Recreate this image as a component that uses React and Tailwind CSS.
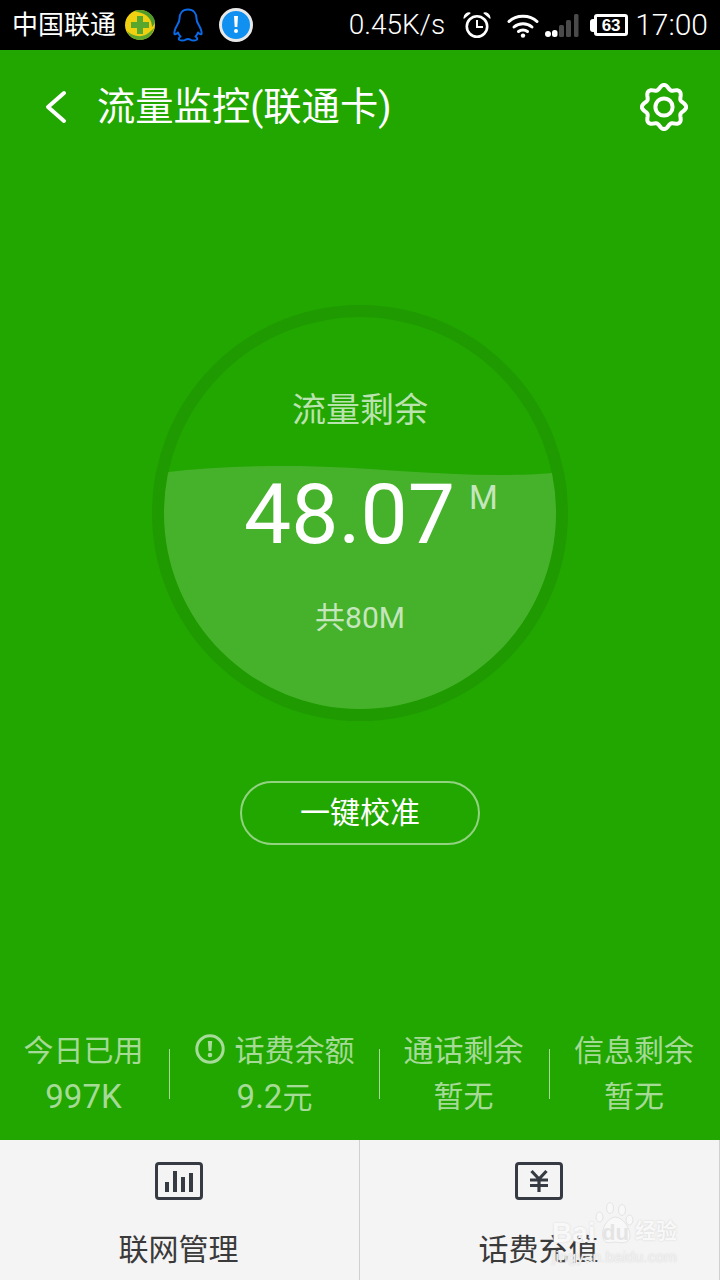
import React from "react";

const CJK = { fontFamily: 'Roboto, "Noto Sans CJK SC", sans-serif' };
const LATIN = { fontFamily: '"Liberation Sans", sans-serif' };

function gearPath(cx, cy, r, amp, n) {
  const pts = [];
  const steps = 160;
  for (let i = 0; i < steps; i++) {
    const t = (i / steps) * Math.PI * 2;
    const rr = r + amp * Math.cos(n * t);
    pts.push(`${(cx + rr * Math.sin(t)).toFixed(2)} ${(cy - rr * Math.cos(t)).toFixed(2)}`);
  }
  return "M" + pts.join("L") + "Z";
}

function Icon360() {
  return (
    <svg width="32" height="32" viewBox="0 0 32 32">
      <circle cx="16" cy="16" r="15" fill="#f0d010" />
      <path d="M16 1C23 1 29 5 31 12C30 16 29 17 28 18C28 11 24 5 14 3C12 2.5 11 2 10 2.3C12 1.4 14 1 16 1Z" fill="#4f9a2c" />
      <path d="M3 22C8 27 17 29 23 25C26 23 28 21 30 19C29 26 23 31 16 31C10 31 5 27 3 22Z" fill="#5fa62c" />
      <path d="M13 7H19V13H25V19H19V25H13V19H7V13H13Z" fill="#57a72e" />
    </svg>
  );
}

function IconQQ() {
  return (
    <svg width="30" height="34" viewBox="0 0 30 34" fill="none" stroke="#0a6ae8" strokeWidth="2">
      <path d="M15 1.5C9 1.5 6.5 6 6.5 10.5C6.5 13 6 14 4.5 16.5C2.5 20 1 24 1.5 26C2.5 27 4 25.5 5 24.5C5.5 26 6.5 27.5 7.5 28.5C6 29.5 5.5 30.5 6 31.5C7 33 11 32.8 13 31.5C14 31 16 31 17 31.5C19 32.8 23 33 24 31.5C24.5 30.5 24 29.5 22.5 28.5C23.5 27.5 24.5 26 25 24.5C26 25.5 27.5 27 28.5 26C29 24 27.5 20 25.5 16.5C24 14 23.5 13 23.5 10.5C23.5 6 21 1.5 15 1.5Z" strokeLinejoin="round" />
    </svg>
  );
}

function IconInfo() {
  return (
    <div className="flex h-[34px] w-[34px] items-center justify-center rounded-full border-[3px] border-[#e8e8e8] bg-[#1090f0]">
      <svg width="6" height="18" viewBox="0 0 6 18" fill="#fff">
        <path d="M1 0H5L4.3 11H1.7Z" />
        <circle cx="3" cy="15" r="2" />
      </svg>
    </div>
  );
}

function IconAlarm() {
  return (
    <svg width="30" height="28" viewBox="0 0 30 28" fill="none" stroke="#fff" strokeWidth="2.6">
      <circle cx="15" cy="15.5" r="10.2" />
      <path d="M15 9V16H21" strokeWidth="2" />
      <path d="M2 7C2.5 3.5 5 1.5 8 2Z" fill="#fff" strokeWidth="1.2" strokeLinejoin="round" />
      <path d="M28 7C27.5 3.5 25 1.5 22 2Z" fill="#fff" strokeWidth="1.2" strokeLinejoin="round" />
    </svg>
  );
}

function IconWifi() {
  return (
    <svg width="32" height="25" viewBox="0 0 32 25" fill="none" stroke="#fff" strokeWidth="3" strokeLinecap="round">
      <path d="M2 8.5C9 1.5 23 1.5 30 8.5" />
      <path d="M7 14C12 9.5 20 9.5 25 14" />
      <path d="M11.5 18.5C14 16.5 18 16.5 20.5 18.5" />
      <circle cx="16" cy="22.6" r="2.2" fill="#fff" stroke="none" />
    </svg>
  );
}

function IconSignal() {
  return (
    <svg width="34" height="23" viewBox="0 0 34 23">
      <rect x="0" y="17" width="6" height="6" rx="3" fill="#fff" />
      <rect x="7" y="16" width="5.5" height="7" rx="2.5" fill="#fff" />
      <rect x="14" y="11" width="5" height="12" rx="1.5" fill="#4a4a4a" />
      <rect x="21" y="6" width="5" height="17" rx="1.5" fill="#4a4a4a" />
      <rect x="29" y="0" width="4.5" height="23" rx="1.5" fill="#4a4a4a" />
    </svg>
  );
}

function Battery() {
  return (
    <div className="flex items-center">
      <div className="h-[13px] w-[4px] rounded-l-[3px] bg-white" />
      <div className="flex h-[22px] w-[34px] items-center justify-center rounded-[3px] border-[3px] border-white">
        <span className="text-[17px] font-bold leading-none text-white" style={LATIN}>63</span>
      </div>
    </div>
  );
}

function Stat({ label, children, warn }) {
  return (
    <div className={warn ? "flex h-[50px] items-center justify-center" : "flex h-[50px] items-center justify-center pr-[2px]"}>
      <div className="flex flex-col items-center text-[30px] leading-[46px] text-white/60">
        <div className="flex items-center whitespace-nowrap">
          {warn && (
            <svg className="mr-[10px] mt-[-4px]" width="30" height="30" viewBox="0 0 30 30" fill="none">
              <circle cx="15" cy="15" r="13.2" stroke="currentColor" strokeWidth="3" />
              <path d="M12.8 7H17.2L16.4 17H13.6Z" fill="currentColor" />
              <circle cx="15" cy="21" r="2.3" fill="currentColor" />
            </svg>
          )}
          <span>{label}</span>
        </div>
        <div>{children}</div>
      </div>
    </div>
  );
}

function Divider() {
  return <div className="h-[50px] w-px shrink-0 bg-white/60" />;
}

function BottomItem({ children, label }) {
  return (
    <div className="flex w-[360px] flex-col items-center border-r border-[#d0d0d0] pr-[2px] pt-[22px]">
      {children}
      <div className="mt-[30px] text-[30px] leading-[40px] text-[#3a3a3a]">{label}</div>
    </div>
  );
}

export default function App() {
  return (
    <div className="relative flex h-[1280px] w-[720px] flex-col overflow-hidden bg-[#22a600]" style={CJK}>
      {/* status bar */}
      <div className="flex h-[50px] shrink-0 items-center bg-black pl-[12px] pr-[12px] text-white">
        <span className="text-[26px] leading-none">中国联通</span>
        <div className="ml-[8px]"><Icon360 /></div>
        <div className="ml-[17px]"><IconQQ /></div>
        <div className="ml-[16px]"><IconInfo /></div>
        <div className="ml-auto flex items-center">
          <span className="text-[28px] leading-none font-light">0.45K/s</span>
          <div className="ml-[17px]"><IconAlarm /></div>
          <div className="ml-[15px]"><IconWifi /></div>
          <div className="ml-[6px]"><IconSignal /></div>
          <div className="ml-[11px]"><Battery /></div>
          <span className="ml-[7px] text-[30px] leading-none font-light">17:00</span>
        </div>
      </div>

      {/* header */}
      <div className="flex h-[114px] shrink-0 items-center pl-[45px] pr-[32px] text-white">
        <svg width="22" height="34" viewBox="0 0 22 34" fill="none" stroke="#fff" strokeWidth="4" strokeLinecap="round" strokeLinejoin="round">
          <path d="M19 3L3 17L19 31" />
        </svg>
        <div className="ml-[30px] flex-1 text-[38.3px] leading-none">流量监控(联通卡)</div>
        <svg width="48" height="48" viewBox="0 0 48 48" fill="none" stroke="#fff" strokeWidth="4">
          <path d={gearPath(24, 24, 20, 2.1, 8)} strokeLinejoin="round" />
          <circle cx="24" cy="24" r="8.6" />
        </svg>
      </div>

      {/* gauge */}
      <div className="mt-[141px] flex shrink-0 justify-center">
        <div className="relative h-[416px] w-[416px] rounded-full border-[12px] border-[#1f9a00]">
          <svg className="absolute inset-0" width="392" height="392" viewBox="0 0 392 392">
            <defs>
              <clipPath id="gauge-clip"><circle cx="196" cy="196" r="196" /></clipPath>
            </defs>
            <path clipPath="url(#gauge-clip)" d="M0 155.5C45 150 95 148.5 136 149C200 150 270 158 336 158C360 158 380 157 392 155.5V392H0Z" fill="#46b22b" />
          </svg>
          <div className="relative flex flex-col items-center pt-[70px]">
            <div className="text-[34px] leading-[46px] text-white/70">流量剩余</div>
            <div className="mt-[34px] mr-[21px] flex h-[96px] items-center">
              <span className="text-[84px] leading-none text-white">48.07</span>
            </div>
            <div className="mt-[35px] text-[30px] leading-[40px] text-white/70">共80M</div>
            <div className="absolute left-[305px] top-[164px] text-[33px] leading-none text-white/70">M</div>
          </div>
        </div>
      </div>

      {/* calibrate button */}
      <div className="mt-[60px] flex shrink-0 justify-center">
        <div className="flex h-[64px] w-[240px] items-center justify-center rounded-full border-2 border-white/50 text-[30px] leading-none text-white">一键校准</div>
      </div>

      <div className="flex-1" />

      {/* stats */}
      <div className="flex h-[116px] shrink-0 items-start pt-[25px]">
        <div className="w-[169px]"><Stat label="今日已用"><span className="text-[33px]">997K</span></Stat></div>
        <Divider />
        <div className="w-[209px]"><Stat label="话费余额" warn><span className="text-[33px]">9.2</span>元</Stat></div>
        <Divider />
        <div className="w-[169px]"><Stat label="通话剩余">暂无</Stat></div>
        <Divider />
        <div className="w-[170px]"><Stat label="信息剩余">暂无</Stat></div>
      </div>

      {/* bottom bar */}
      <div className="flex h-[140px] shrink-0 bg-[#f4f4f4]">
        <BottomItem label="联网管理">
          <svg width="48" height="38" viewBox="0 0 48 38" fill="none">
            <rect x="1.5" y="1.5" width="45" height="35" rx="2.5" stroke="#363a42" strokeWidth="3" />
            <rect x="10" y="20" width="4" height="10" fill="#363a42" />
            <rect x="18" y="9" width="4" height="21" fill="#363a42" />
            <rect x="26" y="15" width="4" height="15" fill="#363a42" />
            <rect x="34" y="11" width="4" height="19" fill="#363a42" />
          </svg>
        </BottomItem>
        <BottomItem label="话费充值">
          <svg width="48" height="38" viewBox="0 0 48 38" fill="none">
            <rect x="1.5" y="1.5" width="45" height="35" rx="2.5" stroke="#363a42" strokeWidth="3" />
            <path d="M16.5 9L24 17L31.5 9M15 18H33M15 23.5H33M24 17V30" stroke="#363a42" strokeWidth="3.2" />
          </svg>
        </BottomItem>
      </div>

      {/* watermark */}
      <div className="absolute left-[545px] top-[1202px] h-[66px] w-[140px]">
        <svg className="absolute left-[50px] top-0" width="40" height="46" viewBox="0 0 40 46" fill="#f8f8f8" stroke="#e4e4e4" strokeWidth="1">
          <ellipse cx="4.5" cy="15" rx="3.5" ry="5" />
          <ellipse cx="15" cy="6" rx="3.5" ry="5.5" />
          <ellipse cx="27" cy="8" rx="3.5" ry="5.5" />
          <ellipse cx="34.5" cy="18" rx="3.5" ry="5" />
          <path d="M8 35C6 27 12 16 20 15C28 15 36 27 35 35C34 42 26 41 20 40C14 41 9 42 8 35Z" />
        </svg>
        <span className="absolute left-[7px] top-[17px] text-[28px] font-bold leading-none text-[#f8f8f8] [text-shadow:0_0_2px_#d4d4d4]" style={LATIN}>Bai</span>
        <span className="absolute left-[57px] top-[20px] text-[22px] font-bold leading-none text-[#e4e4e4]" style={LATIN}>du</span>
        <span className="absolute left-[90px] top-[19px] text-[21px] font-bold leading-none text-[#f8f8f8] [text-shadow:0_0_2px_#d0d0d0]">经验</span>
        <span className="absolute left-[7px] top-[47px] text-[15.5px] leading-none text-[#f0f0f0] [text-shadow:0_0_2px_#d4d4d4]" style={LATIN}>jingyan.baidu.com</span>
      </div>
    </div>
  );
}
